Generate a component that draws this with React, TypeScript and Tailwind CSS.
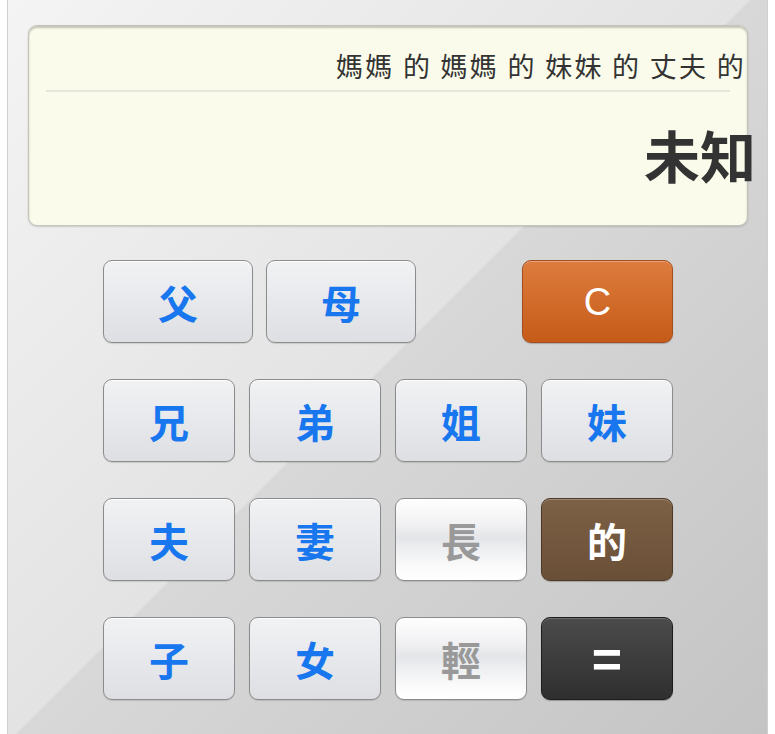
import React from 'react'

type Kind = 'blue' | 'gloss' | 'brown' | 'orange' | 'dark'

const kinds: Record<Kind, string> = {
  blue: 'border-[#8c8c8c] bg-[linear-gradient(to_bottom,#f1f2f4,#dedfe3)] text-[#1877ee] shadow-[inset_0_1px_0_rgba(255,255,255,0.9),0_1px_1px_rgba(0,0,0,0.12)]',
  gloss: 'border-[#8c8c8c] bg-[linear-gradient(to_bottom,#fefefe_0%,#f2f2f4_30%,#e4e5e8_48%,#eeeff1_62%,#fbfbfb_85%,#ffffff_100%)] text-[#999999] shadow-[0_1px_1px_rgba(0,0,0,0.12)]',
  brown: 'border-[#4d3926] bg-[linear-gradient(to_bottom,#7d6146,#6a4f37)] text-white shadow-[inset_0_1px_0_rgba(255,255,255,0.25),0_1px_1px_rgba(0,0,0,0.2)]',
  orange: 'border-[#a24e1f] bg-[linear-gradient(to_bottom,#dd7c3e,#c65b18)] text-white shadow-[inset_0_1px_0_rgba(255,255,255,0.3),0_1px_1px_rgba(0,0,0,0.2)]',
  dark: 'border-[#1c1c1c] bg-[linear-gradient(to_bottom,#4b4b4b,#2f2f2f)] text-white shadow-[inset_0_1px_0_rgba(255,255,255,0.2),0_1px_1px_rgba(0,0,0,0.25)]',
}

const cjk = { fontFamily: '"Noto Sans CJK TC", "Noto Sans", sans-serif' }
const latin = { fontFamily: '"Liberation Sans", Arial, sans-serif' }

function Key({ label, kind = 'blue', w = 'w-[132px]', text = 'text-[40px] font-semibold', font = cjk }: { label: string; kind?: Kind; w?: string; text?: string; font?: React.CSSProperties }) {
  return (
    <button
      className={`${w} h-[83px] shrink-0 rounded-[9px] border flex items-center justify-center leading-none ${text} ${kinds[kind]}`}
      style={font}
    >
      {label}
    </button>
  )
}

export default function App() {
  return (
    <div className="w-[775px] h-[734px] bg-white overflow-hidden">
      <div className="ml-[7px] w-[761px] h-full border-x border-[#cfcfcf] bg-[linear-gradient(135deg,#f4f4f4_0%,#e3e3e3_49.6%,#d8d8d8_49.8%,#c4c4c4_100%)] pt-[25px] px-[20px]">
        {/* Display */}
        <div
          className="w-[720px] h-[201px] rounded-[9px] border border-[#c4c4bc] bg-[#fafbea] shadow-[inset_0_2px_2px_rgba(0,0,0,0.22),0_1px_2px_rgba(0,0,0,0.15)] flex flex-col"
          style={cjk}
        >
          <div className="h-[53px] flex items-end justify-end pr-[1px] text-[27px] tracking-[2.3px] text-[#333333] leading-none">
            媽媽 的 媽媽 的 妹妹 的 丈夫 的
          </div>
          <div className="mt-[11px] mx-[17px] h-[2px] bg-[#e6e6dc]" />
          <div className="mt-[34px] flex justify-end -mr-[9px] text-[56px] font-bold text-[#333333] leading-none">
            未知
          </div>
        </div>

        {/* Keypad */}
        <div className="mt-[34px] pl-[75px] flex flex-col gap-[36px]">
          <div className="flex">
            <Key label="父" w="w-[150px]" />
            <div className="ml-[13px]">
              <Key label="母" w="w-[150px]" />
            </div>
            <div className="ml-[106px]">
              <Key label="C" kind="orange" w="w-[151px]" text="text-[38px] font-normal" font={latin} />
            </div>
          </div>
          <div className="flex gap-[14px]">
            <Key label="兄" />
            <Key label="弟" />
            <Key label="姐" />
            <Key label="妹" />
          </div>
          <div className="flex gap-[14px]">
            <Key label="夫" />
            <Key label="妻" />
            <Key label="長" kind="gloss" />
            <Key label="的" kind="brown" />
          </div>
          <div className="flex gap-[14px]">
            <Key label="子" />
            <Key label="女" />
            <Key label="輕" kind="gloss" />
            <Key label="=" kind="dark" text="text-[52px] font-bold" font={latin} />
          </div>
        </div>
      </div>
    </div>
  )
}
